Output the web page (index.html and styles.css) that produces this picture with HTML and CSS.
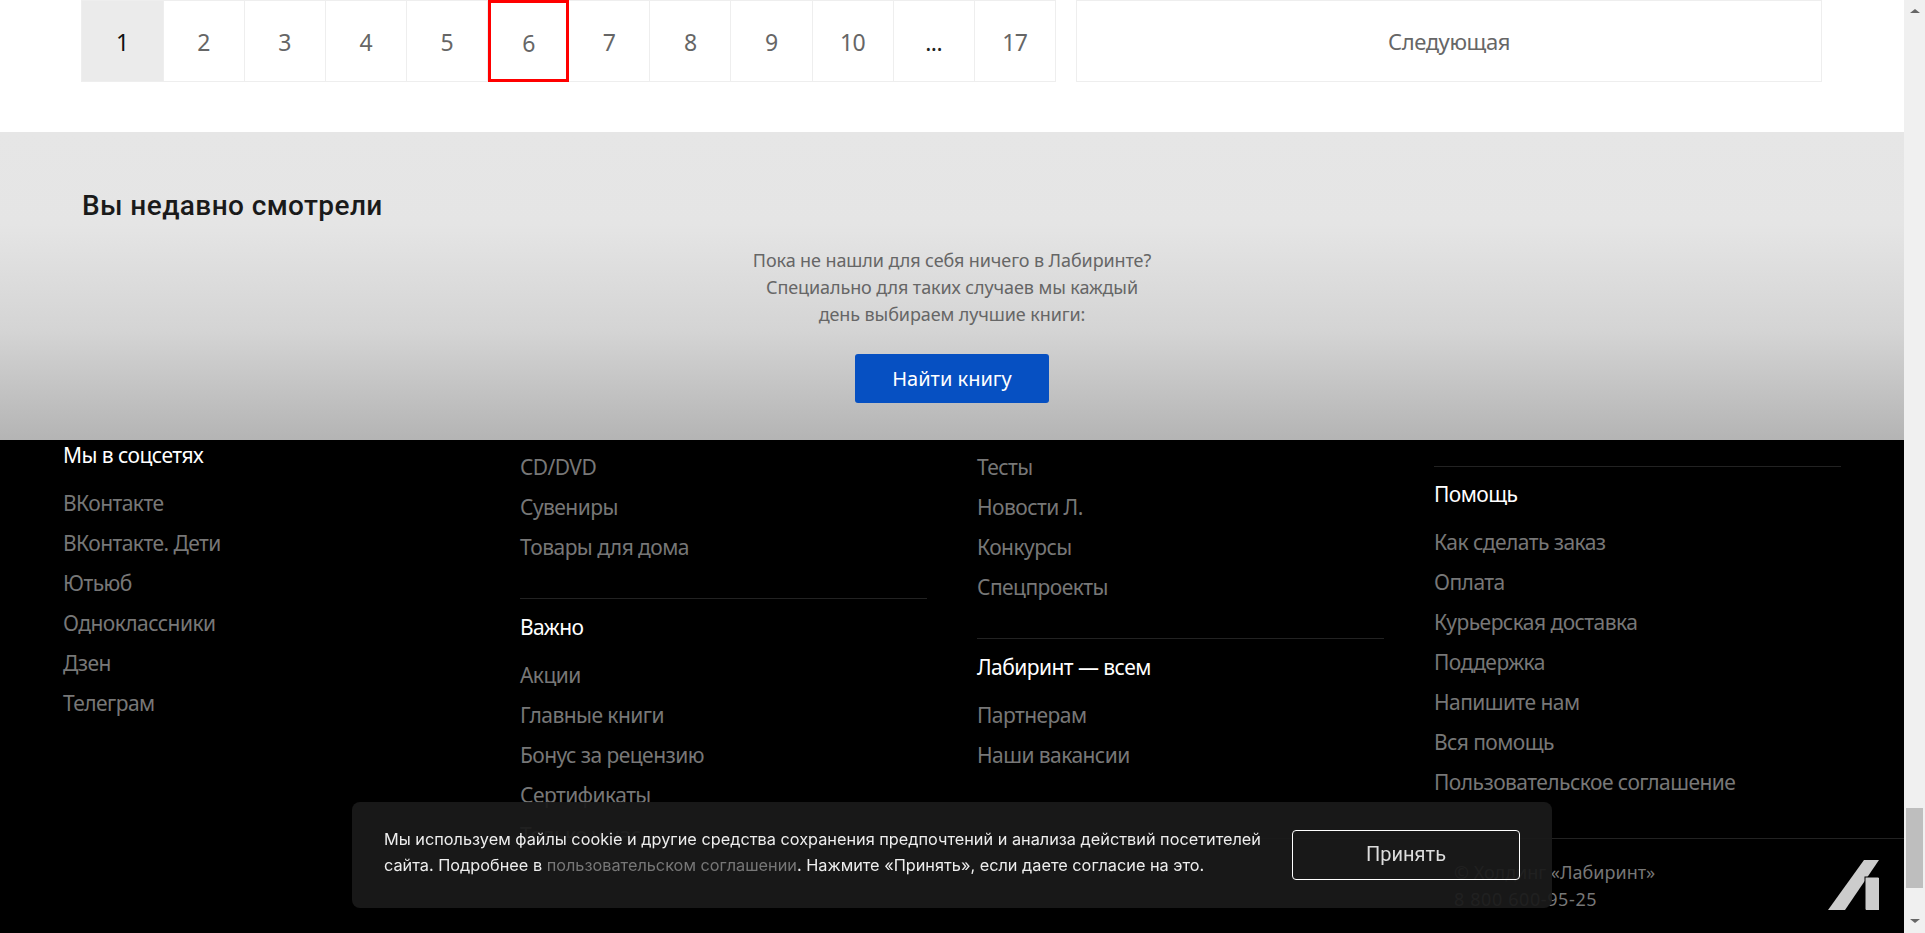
FILE: index.html
```html
<!DOCTYPE html>
<html lang="ru">
<head>
    <meta charset="UTF-8">
    <title>Лабиринт</title>
    <link rel="stylesheet" href="styles.css">
</head>
<body>
<div id="page">
    <div id="paging">
        <ul id="pages">
            <li class="select"><a>1</a></li>
            <li><a>2</a></li>
            <li><a>3</a></li>
            <li><a>4</a></li>
            <li><a>5</a></li>
            <li class="mark"><a>6</a></li>
            <li><a>7</a></li>
            <li><a>8</a></li>
            <li><a>9</a></li>
            <li><a>10</a></li>
            <li class="dots"><a>...</a></li>
            <li><a>17</a></li>
        </ul>
        <a id="next">Следующая</a>
    </div>
    <div id="recent">
        <h2>Вы недавно смотрели</h2>
        <p>Пока не нашли для себя ничего в Лабиринте?<br>Специально для таких случаев мы каждый<br>день выбираем лучшие книги:</p>
        <a id="find">Найти книгу</a>
    </div>
    <div id="footer">
        <div id="cols">
            <div class="col">
                <h3>Мы в соцсетях</h3>
                <ul>
                    <li>ВКонтакте</li>
                    <li>ВКонтакте. Дети</li>
                    <li>Ютьюб</li>
                    <li>Одноклассники</li>
                    <li>Дзен</li>
                    <li>Телеграм</li>
                </ul>
            </div>
            <div class="col pad">
                <ul>
                    <li>CD/DVD</li>
                    <li>Сувениры</li>
                    <li>Товары для дома</li>
                </ul>
                <div class="part">
                    <h3>Важно</h3>
                    <ul>
                        <li>Акции</li>
                        <li>Главные книги</li>
                        <li>Бонус за рецензию</li>
                        <li>Сертификаты</li>
                        <li>Только у нас</li>
                        <li>Предзаказы</li>
                    </ul>
                </div>
            </div>
            <div class="col pad">
                <ul>
                    <li>Тесты</li>
                    <li>Новости Л.</li>
                    <li>Конкурсы</li>
                    <li>Спецпроекты</li>
                </ul>
                <div class="part">
                    <h3>Лабиринт — всем</h3>
                    <ul>
                        <li>Партнерам</li>
                        <li>Наши вакансии</li>
                    </ul>
                </div>
            </div>
            <div class="col top">
                <div class="part first">
                    <h3>Помощь</h3>
                    <ul>
                        <li>Как сделать заказ</li>
                        <li>Оплата</li>
                        <li>Курьерская доставка</li>
                        <li>Поддержка</li>
                        <li>Напишите нам</li>
                        <li>Вся помощь</li>
                        <li>Пользовательское соглашение</li>
                    </ul>
                </div>
            </div>
        </div>
        <div id="bottom">
            <div id="holding">© Холдинг «Лабиринт»<br><span class="phone">8 800 600-95-25</span></div>
            <svg id="logo" width="51" height="50" viewBox="0 0 51 50">
                <polygon points="36,0 51,0 17,50 0,50" fill="#ccc"/>
                <rect x="37" y="17" width="14" height="33" fill="#ccc" stroke="#000" stroke-width="1"/>
                <rect x="38" y="18" width="13" height="32" fill="#ccc"/>
            </svg>
        </div>
    </div>
</div>
<div id="bar">
    <span class="up"></span>
    <span class="thumb"></span>
    <span class="down"></span>
</div>
<div id="cookie">
    <p>Мы используем файлы cookie и другие средства сохранения предпочтений и анализа действий посетителей<br>сайта. Подробнее в <a>пользовательском соглашении</a>. Нажмите «Принять», если даете согласие на это.</p>
    <a id="accept">Принять</a>
</div>
</body>
</html>
```
FILE: styles.css
```css
*{
    margin: 0;
    padding: 0;
    box-sizing: border-box;
}
li{
    list-style: none;
}
html, body{
    height: 100%;
    overflow: hidden;
}
body{
    display: flex;
    font-family: "Noto Sans", sans-serif;
    background: #fff;
}
#page{
    width: 1904px;
    height: 933px;
    overflow: hidden;
}
#paging{
    display: flex;
    gap: 20px;
    height: 132px;
    padding: 0 82px 0 81px;
}
#pages{
    display: flex;
    width: 975px;
    height: 82px;
}
#pages li{
    flex: none;
    width: 81.14px;
    height: 82px;
    border: 1px solid #eee;
    border-left: 0;
}
#pages a, #next{
    display: flex;
    align-items: center;
    justify-content: center;
    height: 82px;
    color: #666;
    font-size: 23px;
    letter-spacing: -0.5px;
}
#pages a{
    height: 80px;
    padding-top: 1px;
}
#pages .select{
    width: 82.5px;
    background: #ebebeb;
    border-left: 1px solid #eee;
}
#pages .select a{
    color: #111;
}
#pages .dots a{
    color: #222;
}
#pages .mark{
    border: 3px solid #f00;
}
#pages .mark a{
    height: 76px;
    padding-top: 4px;
}
#next{
    flex: 1;
    border: 1px solid #eee;
    font-size: 22px;
    letter-spacing: -0.4px;
}
#recent{
    height: 308px;
    padding-top: 57px;
    text-align: center;
    background: linear-gradient(to bottom, #e6e6e6 0%, #e5e5e5 30%, #d4d4d4 65%, #b4b4b4 100%);
}
#recent h2{
    padding-left: 82px;
    text-align: left;
    font: 500 28px/34px Roboto, sans-serif;
    letter-spacing: 0.4px;
    color: #1a1a1a;
}
#recent p{
    margin-top: 23.5px;
    font-size: 18px;
    line-height: 27px;
    letter-spacing: -0.1px;
    color: #666;
}
#find{
    display: block;
    width: 194px;
    height: 49px;
    margin: 26px auto 0;
    border-radius: 3px;
    background: #0650c2;
    color: #fff;
    font-size: 20px;
    line-height: 49px;
}
#footer{
    height: 493px;
    background: #000;
    color: #777;
}
#cols{
    display: grid;
    grid-template-columns: repeat(4, 407px);
    gap: 50px;
    height: 398px;
    padding-left: 63px;
    overflow: hidden;
}
.col h3{
    height: 30px;
    margin-bottom: 13px;
    font-size: 21px;
    font-weight: 400;
    line-height: 30px;
    letter-spacing: -0.55px;
    color: #fff;
}
.col li{
    height: 40px;
    font-size: 21px;
    line-height: 40px;
    letter-spacing: -0.55px;
}
.pad{
    padding-top: 7px;
}
.top{
    padding-top: 26px;
}
.part{
    margin-top: 31px;
    padding-top: 13px;
    border-top: 1px solid #222;
}
.part.first{
    margin-top: 0;
    padding-top: 12px;
}
#bottom{
    display: flex;
    justify-content: space-between;
    margin-left: 1000px;
    height: 95px;
    padding: 20px 25px 0 454px;
    border-top: 1px solid #222;
    font-size: 18px;
    line-height: 27px;
}
.phone{
    letter-spacing: 0.6px;
}
#logo{
    flex: none;
    margin-top: 1px;
}
#bar{
    flex: none;
    display: flex;
    flex-direction: column;
    align-items: center;
    width: 21px;
    height: 933px;
    background: #f0f0f0;
}
#bar .up{
    margin-top: 9px;
    border: 4px solid transparent;
    border-top: 0;
    border-bottom-color: #666;
    border-left-width: 5px;
    border-right-width: 5px;
}
#bar .thumb{
    width: 17px;
    height: 80px;
    margin-top: 795px;
    background: #bebebe;
}
#bar .down{
    margin-top: 31px;
    border: 4px solid transparent;
    border-bottom: 0;
    border-top-color: #666;
    border-left-width: 5px;
    border-right-width: 5px;
}
#cookie{
    position: fixed;
    left: 352px;
    top: 802px;
    display: flex;
    align-items: center;
    width: 1200px;
    height: 106px;
    padding: 0 32px;
    border-radius: 8px;
    background: rgba(26, 26, 26, .93);
}
#cookie p{
    flex: 1;
    padding-bottom: 6px;
    font: 16.3px/26px Inter, sans-serif;
    white-space: nowrap;
    color: #eee;
}
#cookie p a{
    color: #777;
}
#accept{
    flex: none;
    display: block;
    width: 228px;
    height: 50px;
    border: 1px solid #fff;
    border-radius: 4px;
    color: #ddd;
    font: 20px/46px Roboto, sans-serif;
    text-align: center;
}
```
